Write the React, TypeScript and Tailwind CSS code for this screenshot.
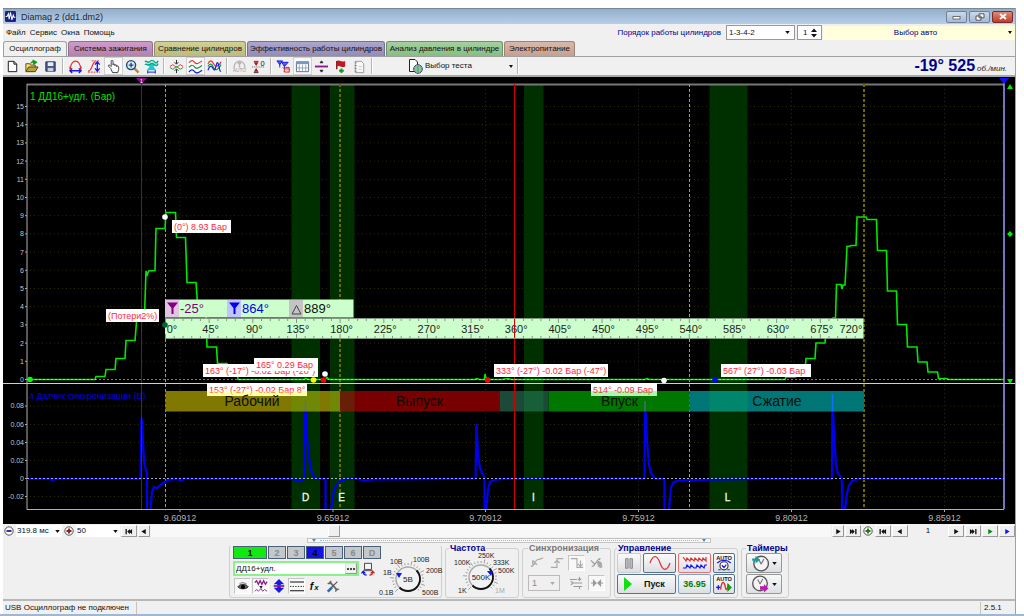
import type { ReactNode } from "react";

const tabs = [
  { label: "Осциллограф", look: "w-[64px] bg-[#f0f0f0] border-[#a0a0a0]" },
  { label: "Система зажигания", look: "w-[85px] bg-linear-to-b from-[#cf9cc9] to-[#b57fb0] border-[#93708f]" },
  { label: "Сравнение цилиндров", look: "w-[92px] bg-linear-to-b from-[#d0cf96] to-[#bdbb78] border-[#93916a]" },
  { label: "Эффективность работы цилиндров", look: "w-[138px] bg-linear-to-b from-[#aea6cf] to-[#938ab8] border-[#77709a]" },
  { label: "Анализ давления в цилиндре", look: "w-[117px] bg-linear-to-b from-[#a5cf9f] to-[#86bd80] border-[#6c9468]" },
  { label: "Электропитание", look: "w-[71px] bg-linear-to-b from-[#d6b9ab] to-[#c5a08f] border-[#9c8377]" },
];

const Svg = ({ children, box = "0 0 16 16", className = "size-4" }: { children: ReactNode; box?: string; className?: string }) => (
  <svg viewBox={box} className={className} fill="none" aria-hidden="true">{children}</svg>
);

const Tool = ({ name, pressed, children }: { name: string; pressed?: boolean; children: ReactNode }) => (
  <button
    type="button"
    aria-label={name}
    className={`flex h-[18px] w-[19px] shrink-0 items-center justify-center ${pressed ? "border border-[#d0d0d0] bg-[#fafafa]" : ""}`}
  >
    <Svg className="size-[15px]">{children}</Svg>
  </button>
);

const Sep = () => <span className="mx-[2px] h-4 w-[2px] shrink-0 border-l border-[#b4b4b4] bg-white" />;

const Caret = () => (
  <Svg box="0 0 6 4" className="h-[3px] w-[5px] shrink-0"><path d="M0 0H6L3 4Z" fill="#111" /></Svg>
);

const Pick = ({ label, value, className }: { label: string; value: string; className: string }) => (
  <span className={`relative flex items-center bg-white ${className}`}>
    <select aria-label={label} className="h-full w-full appearance-none bg-transparent pl-px text-[8px] leading-3 outline-none" defaultValue={value}>
      <option>{value}</option>
    </select>
    <span className="pointer-events-none absolute right-[2px] flex"><Caret /></span>
  </span>
);

const NavButton = ({ name, path, fill = "#111", className = "w-4" }: { name: string; path: string; fill?: string; className?: string }) => (
  <button type="button" aria-label={name} className={`flex h-3 items-center justify-center border border-white border-r-[#9a9a9a] border-b-[#9a9a9a] bg-[#f0f0f0] ${className}`}>
    <Svg box="0 0 10 8" className="h-[7px] w-2.5"><path d={path} fill={fill} /></Svg>
  </button>
);

const FIRST = "M1 1H2.5V7H1ZM3 4L6 1V7ZM5 4L8.5 1V7Z";
const PREV = "M2 4L7 1V7Z";
const NEXT = "M8 4L3 1V7Z";
const LAST = "M9 1H7.5V7H9ZM7 4L4 1V7ZM5 4L1.5 1V7Z";

const Header = () => (
  <header>
    <div className="flex h-4 items-center border-t border-[#7c8794] bg-linear-to-b from-[#93aecb] to-[#b8cfe8] pr-[2px] pl-[2px]">
      <Svg className="size-[11px]">
        <rect width="16" height="16" rx="2" fill="#1b2384" />
        <path d="M1 8H3L5 4L6 12L8 2L10 13L12 6L13 9H15" stroke="#fff" strokeWidth="1.5" />
      </Svg>
      <h1 className="ml-[5px] flex-1 text-[9px] leading-3 text-[#1c2733]">Diamag 2 (dd1.dm2)</h1>
      <div className="flex gap-[2px]">
        <button type="button" aria-label="Свернуть" className="flex h-3 w-[21px] items-center justify-center rounded-[2px] border border-[#6d8098] bg-linear-to-b from-[#cbdaea] to-[#a4bbd3]">
          <Svg box="0 0 9 7" className="h-[7px] w-[9px]"><rect x="1" y="3.5" width="7" height="2.5" fill="#fff" stroke="#555" strokeWidth=".8" /></Svg>
        </button>
        <button type="button" aria-label="Восстановить" className="flex h-3 w-[21px] items-center justify-center rounded-[2px] border border-[#6d8098] bg-linear-to-b from-[#cbdaea] to-[#a4bbd3]">
          <Svg box="0 0 10 8" className="h-2 w-2.5"><path d="M4 .8H9V4.8H4ZM1 3H6V7.2H1Z" fill="#fff" stroke="#555" /></Svg>
        </button>
        <button type="button" aria-label="Закрыть" className="flex h-3 w-[21px] items-center justify-center rounded-[2px] border border-[#7c2c22] bg-linear-to-b from-[#e08873] to-[#bd3c28]">
          <Svg box="0 0 8 7" className="h-[7px] w-2"><path d="M1 1L7 6M7 1L1 6" stroke="#fff" strokeWidth="2" /></Svg>
        </button>
      </div>
    </div>
    <div className="flex h-[17px] items-center">
      <nav className="flex flex-1 gap-[4px] pl-[3px] text-[8px] leading-3">
        {["Файл", "Сервис", "Окна", "Помощь"].map((item) => <a key={item} href="#">{item}</a>)}
      </nav>
      <label htmlFor="order" className="mr-[5px] text-[8px] text-[#00008b]">Порядок работы цилиндров</label>
      <span className="relative mr-[2px] flex h-[15px] w-[69px] items-center border border-[#999] bg-white">
        <select id="order" className="h-full w-full appearance-none bg-transparent pl-[2px] text-[8px] outline-none" defaultValue="1-3-4-2">
          <option>1-3-4-2</option>
        </select>
        <span className="pointer-events-none absolute right-1 flex"><Caret /></span>
      </span>
      <span className="mr-px flex h-[15px] w-[25px] items-center border border-[#999] bg-white">
        <input aria-label="Номер цилиндра" type="number" defaultValue={1} className="w-[13px] [appearance:textfield] pl-[5px] text-[8px] outline-none [&::-webkit-inner-spin-button]:appearance-none" />
        <Svg box="0 0 6 10" className="h-2.5 w-1.5"><path d="M0 4L3 0.5L6 4ZM0 6H6L3 9.5Z" fill="#111" /></Svg>
      </span>
      <button type="button" className="flex h-[14px] w-[192px] items-center bg-[#ffffdc] pr-[3px] text-[8px] text-[#00008b]">
        <span className="flex-1">Выбор авто</span>
        <Svg box="0 0 4 3" className="h-[3px] w-1"><path d="M0 0H4L2 3Z" fill="#111" /></Svg>
      </button>
    </div>
    <div role="tablist" className="flex h-4 items-end gap-px border-b border-[#a0a0a0]">
      {tabs.map((tab, i) => (
        <button key={tab.label} role="tab" type="button" aria-selected={i === 0} className={`h-[15px] rounded-t-[3px] border border-b-0 text-[8px] leading-3 whitespace-nowrap ${tab.look}`}>
          {tab.label}
        </button>
      ))}
    </div>
  </header>
);

const Toolbar = () => (
  <div className="flex h-[20px] items-center border-b-2 border-[#a8a8a8]">
    <Tool name="Новый"><path d="M3.5 2.5H9.5L12.5 5.5V13.5H3.5Z" fill="#fff" stroke="#111" /><path d="M9.5 2.5V5.5H12.5" stroke="#111" /></Tool>
    <Tool name="Открыть">
      <path d="M2 13V5H6L7 6.5H12V9" fill="#f6e27a" stroke="#5a4a10" />
      <path d="M2 13.5L5 8.5H15L12 13.5Z" fill="#b9a43c" stroke="#4a3c08" />
      <path d="M7 5C8 2 10 2 11 3M9.5 1L14 3.5L10 6Z" fill="#0a9a1a" stroke="#0a9a1a" strokeWidth=".8" />
    </Tool>
    <Tool name="Сохранить">
      <path d="M3 3H13V13H3Z" fill="#4a5a84" stroke="#2a3556" /><path d="M5 3.5H11V7.5H5Z" fill="#e6eef8" /><path d="M5 9.5H11V13H5Z" fill="#c6d1e6" />
    </Tool>
    <Sep />
    <Tool name="Период"><path d="M2.500 11C2.500 -.500 13.500 -.500 13.500 11" stroke="#e83030" strokeWidth="1.300" /><path d="M2 8V11M14 8V11" stroke="#e83030" /><path d="M3 12.500H13M4.500 10L2 12.500L4.500 15M11.500 10L14 12.500L11.500 15" stroke="#1717e6" strokeWidth="1.400" /></Tool>
    <Tool name="Амплитуда"><path d="M1 13C6 13 5 3 9 3" stroke="#e83030" strokeWidth="1.300" /><path d="M1 14H14M5 2H14" stroke="#e83030" strokeDasharray="2 1" /><path d="M11 4V12M8.500 6L11 3L13.500 6M8.500 10L11 13L13.500 10" stroke="#1717e6" strokeWidth="1.400" /></Tool>
    <Tool name="Перемещение" pressed>
      <path d="M5 10L2.500 7.500C2 6.500 3.500 6 4.500 7L5.500 8V2.500C5.500 1 7.500 1 7.500 2.500V6.500M7.500 6C8 5 9.500 5.200 9.500 6.500V7.500M9.500 6.500C10.500 5.800 11.500 6.200 11.500 7.500V8.500M11.500 7.500C12.500 7 13.500 7.500 13.500 9V11L12.500 14.500H7L5 10" fill="#fff" stroke="#222" strokeWidth=".9" />
    </Tool>
    <Tool name="Лупа"><path d="M10 10L14.500 14.500" stroke="#b48a3c" strokeWidth="2.600" /><circle cx="6.500" cy="6.500" r="4.800" fill="#d4ecfa" stroke="#24466e" strokeWidth="1.500" /><path d="M4 6.500H9M6.500 4V9" stroke="#24466e" strokeWidth="1.400" /></Tool>
    <Tool name="Диапазон"><path d="M3 5L6 8L3 12H13L10 8L13 5Z" fill="#1fc8cc" /><path d="M1 3C3 1 4 5 6 3S9 1 11 3S14 4 15 2M1 6C3 4 4 8 6 6S9 4 11 6S14 7 15 5" stroke="#00a88c" strokeWidth="1.500" /><path d="M4 12V15.500M12 12V15.500M4 14H12" stroke="#1717e6" /></Tool>
    <Sep />
    <Tool name="Совместить"><path d="M1 8L4 6L8 9L12 6L15 8" stroke="#e83030" /><path d="M1 9L4 11L8 8L12 11L15 9" stroke="#09a030" /><path d="M8 1V5M6 3.500L8 5.500L10 3.500M8 15V11M6 12.500L8 10.500L10 12.500" stroke="#222" /></Tool>
    <Tool name="Разделить" pressed><path d="M1 4C3 1 5 1 7 3.500S11 5 15 2" stroke="#e83030" strokeWidth="1.300" /><path d="M1 9C3 6 5 6 7 8.500S11 10 15 7" stroke="#09a030" strokeWidth="1.300" /><path d="M1 14C3 11 5 11 7 13.500S11 15 15 12" stroke="#1717e6" strokeWidth="1.300" /></Tool>
    <Tool name="Наложить"><path d="M1 5C3 1 5 1 7 5S12 9 15 3" stroke="#e83030" strokeWidth="1.200" /><path d="M1 8C3 4 5 5 7 9S12 12 15 6" stroke="#09a030" strokeWidth="1.200" /><path d="M1 12C3 6 5 7 7 11S10 2 11.500 4S13 14 15 13" stroke="#1717e6" strokeWidth="1.200" /></Tool>
    <Sep />
    <Tool name="Авто"><path d="M2 10C2 -.500 14 -.500 14 10" stroke="#b4b4b4" strokeWidth="1.300" /><path d="M8 3V9M6 5L8 3L10 5" stroke="#b5b5b5" strokeWidth="1.500" /><text x="1" y="14" fontSize="5" fill="#999">AUTO</text></Tool>
    <Tool name="Установка нуля"><path d="M1 8.500H15" stroke="#555" strokeDasharray="1 1" /><path d="M3 2.500H8M3 14.500H8" stroke="#333" /><path d="M3 3.500H8L5.500 7.500ZM3 13.500H8L5.500 9.500Z" fill="#b01020" /><text x="10" y="7" fontSize="8" fill="#111">0</text></Tool>
    <Sep />
    <Tool name="Маркеры"><path d="M1 2H7L4 6ZM4 5V9M6 3.500H13L9 8ZM9 7V11" fill="#5b60f0" stroke="#1717e6" /><path d="M7 9L14 14M8 13H14V9H10" stroke="#d02020" /><path d="M9 10.500H14V14H9Z" fill="#f7c8c8" stroke="#d02020" strokeWidth=".800" /></Tool>
    <Tool name="Таблица" pressed><path d="M1.500 3H14.500V13.500H1.500Z" fill="#fff" stroke="#5a6a86" /><path d="M1.500 3H14.500V5.500H1.500Z" fill="#7a98c4" /><path d="M4.500 6V13M8 6V13M11.500 6V13M2 9.500H14" stroke="#8090a8" strokeWidth=".800" /></Tool>
    <Tool name="Разделитель"><path d="M1 8H15" stroke="#8d1a8d" strokeWidth="2" /><path d="M6.500 4L8 2L9.500 4ZM6.500 12L8 14L9.500 12Z" fill="#222" stroke="#222" /></Tool>
    <Tool name="Флажки"><path d="M4 2V11" stroke="#801010" strokeWidth="1.500" /><path d="M4 2C7 .500 9 4 13 2V8C9 10 7 6 4 8Z" fill="#c01824" /><path d="M9 10V15M6.500 12.500H11.500" stroke="#08a010" strokeWidth="2" /></Tool>
    <Tool name="Заметки"><path d="M3.500 2.500H10L12.500 5V14.500H3.500Z" fill="#f8f8f8" stroke="#999" /><path d="M3 4H5M3 7H5M3 10H5M3 13H5" stroke="#777" /><path d="M7 8H11M7 11H10" stroke="#ccc" /></Tool>
    <Sep />
    <button type="button" className="ml-[30px] flex h-4 w-[110px] items-center gap-[2px] pl-[2px] text-left text-[8px] leading-3">
      <Svg box="0 0 16 16" className="h-4 w-4">
        <path d="M2.500 1.500H8L10.500 4V13.500H2.500Z" fill="#fff" stroke="#222" /><circle cx="11" cy="11" r="4.300" fill="#b9dfc0" stroke="#345" /><path d="M7 11H15M11 7V15M8 9H14M8 13H14" stroke="#386" strokeWidth=".700" />
      </Svg>
      <span className="flex-1">Выбор теста</span>
      <Svg box="0 0 4 3" className="mr-[2px] h-[3px] w-1"><path d="M0 0H4L2 3Z" fill="#111" /></Svg>
    </button>
    <Sep />
    <output className="ml-auto flex items-baseline gap-[2px] pr-2 font-bold text-[#00008b]">
      <span className="text-[16px] leading-4">-19° 525</span>
      <span className="text-[8px] font-normal text-[#222] italic">об./мин.</span>
    </output>
  </div>
);

const pressure =
  "M30 379.500H95L96 376.500H105L106 369.500H115L116 358.500H125L126 340.500H135L137 316H144.500L146 271L147 276L148.500 271L155 270.500L156 228.500H165L166 212.500H175.500L176.500 237.500H185.500L187 282.500H196L198 311H206L207 347H216.500L217.500 363.500H227L228 373H237L238 379.500H304L306 378.500L308 379.500H325L327 377.500L329 379.500H475L477 378.500L479 379.500H484.500L485 374L486.500 379.500H502L507 378.500L512 379.500H645L647 378.500L649 379.500H785L786 377H795L796 371H805L806 358.500H815L816 343H825L826 330H832L833 318H835.500L836.500 284.500H841L842 289L843 285H845L847 246.500L850 246L851 245.500H856L857 217H866L867 219.500H876.500L877.500 250.500H886.500L887.500 291H896.500L897.500 324.500H906.500L907.500 347H917L918 362H927L928 372H937.500L938.500 378.500H947L948 379.500H1004";

const sync =
  "M27 479H50L52 480L56 479H140.500L141.500 418L142.500 430L143.500 452L144.500 465L147 473V509M150.500 509L152 492L154 487L157 488L162 484L168 480L175 479L182 480L184 478.500L190 479H293L298 481L303 480L304 479L305.500 400L307 438L309 458L311 470L313 475L316 479H325.500V509M331 509L333 495L336 485L340 481L348 478.500L358 479L364 480.500L372 479.500L450 479L475.500 478.500L476.500 424L478 455L480 468L482 473L484.500 477V509M486.500 509L488 489L490 482L494 480L502 479H560L640 478.500L644.500 479L645 401L647 440L649 465L651 473L654 477L656 479H664.500V509M669 509L671 487L674 482L679 480.500L690 480L760 479H832L832.500 394L834 435L836 465L838 474L841 477L842 483V509M845 509L847 493L849 486L852 481L858 479H1004";

const zones = [[291.5, 28.5, "D", 305.5], [330, 24.5, "E", 341.5], [524, 19.5, "I", 533.5], [709.5, 38, "L", 727.5]] as const;
const phases = [
  [165.5, 174.5, "#807800", "Рабочий", 252],
  [340, 159.5, "#780000", "Выпуск", 419.5],
  [499.5, 49, "#1b4a38", "", 0],
  [548.5, 141, "#007800", "Впуск", 619.5],
  [689.5, 174.5, "#007676", "Сжатие", 777],
] as const;
const times = [[180, "9.60912"], [333, "9.65912"], [485.5, "9.70912"], [638.5, "9.75912"], [791.5, "9.80912"], [944.5, "9.85912"]] as const;
const notes = [
  [172, 220, 59, "(0°) 8.93 Бар"],
  [106, 309, 53, "(Потери2%)"],
  [203, 364, 115, "163° (-17°) -0.02 Бар (-20°)"],
  [254, 358, 64, "165° 0.29 Бар"],
  [207, 383, 100, "153° (-27°) -0.02 Бар 8°"],
  [494, 364, 114, "333° (-27°) -0.02 Бар (-47°)"],
  [591, 383, 66, "514° -0.09 Бар"],
  [721, 364, 90, "567° (27°) -0.03 Бар"],
] as const;
const dots = [
  [165, 217, "#fff"], [30, 379.5, "#0f0"], [165, 325, "#063"], [313.5, 380, "#ff0"], [323.5, 380, "#f00"],
  [325, 374, "#fff"], [487.5, 380, "#f00"], [664, 380.5, "#fff"], [715, 380, "#00f"],
] as const;
const degrees = Array.from({ length: 16 }, (_, i) => i * 45);
const minor = Array.from({ length: 80 }, (_, i) => i).map((i) => {
  const x = (165.5 + i * 8.73).toFixed(1);
  const len = i % 5 === 0 ? 4 : 2;
  return `M${x} 319v${len}M${x} 338v-${len}`;
}).join("");

const Chart = () => (
  <svg viewBox="3 77 1012 447" className="block h-auto w-full bg-black" role="img" aria-label="Осциллограмма" fill="none">
    <g stroke="#2b2b08" strokeDasharray="1 3">
      {Array.from({ length: 15 }, (_, i) => <path key={i} d={`M30 ${379.5 - (i + 1) * 18.2}H1003`} />)}
      {[406, 424.5, 442.5, 460.5, 496.5].map((y) => <path key={y} d={`M30 ${y}H1003`} />)}
      {times.map(([x]) => <path key={x} d={`M${x} 85V509`} />)}
    </g>
    {zones.map(([x, w]) => <rect key={x} x={x} y="84" width={w} height="425" fill="#003000" />)}
    <path d="M27 84.500H1004" stroke="#777" strokeWidth="2" />
    <path d="M27 84V509.500H1004" stroke="#b0b0b0" />
    <g fontSize="7" fill="#c4c4c4" textAnchor="end">
      {Array.from({ length: 16 }, (_, i) => (
        <g key={i}><text x="24" y={382 - i * 18.2}>{i}</text><path d={`M25 ${379.5 - i * 18.2}h2`} stroke="#aaa" /></g>
      ))}
      {[["0.08", 406], ["0.06", 424.5], ["0.04", 442.5], ["0.02", 460.5], ["0", 478.5], ["-0.02", 496.5]].map(([t, y]) => (
        <g key={t}><text x="24" y={Number(y) + 2}>{t}</text><path d={`M25 ${y}h2`} stroke="#aaa" /></g>
      ))}
    </g>
    <g fontSize="9" fill="#b4b4b4" textAnchor="middle">
      {times.map(([x, t]) => <g key={t}><text x={x} y="521">{t}</text><path d={`M${x} 510v2`} stroke="#aaa" /></g>)}
    </g>
    <path d="M165.500 84V509M689.500 84V509" stroke="#b4ac00" strokeDasharray="3 2" />
    <path d="M340 84V509M864 84V509" stroke="#6e6600" strokeWidth="2" strokeDasharray="3 2" />
    <text x="30" y="100" fontSize="10" fill="#00e000">1 ДД16+удл. (Бар)</text>
    <text x="29" y="399" fontSize="9" fill="#0000e0">4 Датчик синхронизации (В)</text>
    <path d={sync} stroke="#0000f0" strokeWidth="2.200" />
    <path d="M27 478.500H1004" stroke="#d8d8ff" strokeDasharray="2 2" strokeWidth=".800" />
    {phases.map(([x, w, fill]) => <rect key={x} x={x} y="391" width={w} height="20.500" fill={fill} />)}
    <path d="M291.500 391h28.500v20.500h-28.500ZM330 391h24.500v20.500h-24.500ZM709.500 391h38v20.500h-38ZM524 391h19.500v20.500h-19.500Z" fill="#00ff30" fillOpacity=".12" />
    <path d="M305.500 401V411M645 401V411" stroke="#5a6a9a" strokeOpacity=".8" strokeWidth="1.500" />
    <path d="M832.500 394V411" stroke="#1070ff" strokeWidth="1.500" />
    <path d="M141.500 80V509" stroke="#800080" />
    <path d="M136 78H147L141.500 84Z" fill="#8a108a" />
    <text x="140" y="83" fontSize="5" fill="#fff">1</text>
    <path d="M514.500 84V509" stroke="#d00000" />
    <path d={pressure} stroke="#00e800" strokeWidth="1.600" />
    <path d="M27 379.500H1004" stroke="#fff" strokeOpacity=".6" strokeDasharray="2 2" strokeWidth=".800" />
    <path d="M3 383.500H1015" stroke="#d0d0d0" />
    <rect x="165" y="299.500" width="188.500" height="18" fill="#ccffcc" />
    <rect x="165" y="300" width="14" height="17" fill="#e0c4e0" />
    <rect x="227" y="300" width="14" height="17" fill="#c0c4ff" />
    <rect x="289" y="300" width="14" height="17" fill="#c4c4c4" />
    <path d="M167 302.500H178L173.500 308V314H171.500V308Z" fill="#800080" />
    <path d="M229 302.500H240L235.500 308V314H233.500V308Z" fill="#0000f0" />
    <path d="M292 314L296.500 305.500L301 314Z" stroke="#444" />
    <g fontSize="13">
      <text x="180" y="313" fill="#800080">-25°</text>
      <text x="242" y="313" fill="#0000f0">864°</text>
      <text x="304" y="313" fill="#111">889°</text>
    </g>
    <rect x="165" y="318.500" width="698.500" height="20" fill="#ccffcc" />
    <path d={minor} stroke="#6a806a" strokeWidth=".800" />
    <path d="M165 318.500H863.500M165 338.500H863.500" stroke="#889c88" strokeWidth=".800" />
    <g fontSize="11" fill="#1c241c" textAnchor="middle">
      {degrees.map((d) => <text key={d} x={d === 0 ? 172 : 167 + d * 0.97} y="333">{d}°</text>)}
      <text x="851" y="333">720°</text>
    </g>
    <path d="M514.500 319V338" stroke="#d00000" />
    <g fontSize="9" fill="#ff2a3a">
      {notes.map(([x, y, w, t]) => (
        <g key={t}><rect x={x} y={y} width={w} height="13" fill="#fff" /><text x={x + 2} y={y + 10}>{t}</text></g>
      ))}
    </g>
    <rect x="207" y="391" width="100" height="5" fill="#ffff40" fillOpacity=".45" />
    <rect x="591" y="391" width="66" height="5" fill="#20e020" fillOpacity=".35" />
    <g fontSize="14" fill="#0a0f0a" textAnchor="middle">
      {phases.map(([x, , , t, tx]) => t && <text key={x} x={tx} y="406">{t}</text>)}
    </g>
    <g fontSize="10" fill="#e8ffe8" stroke="#e8ffe8" strokeWidth=".300" textAnchor="middle">
      {zones.map(([, , t, tx]) => <text key={t} x={tx} y="501">{t}</text>)}
    </g>
    {dots.map(([x, y, fill]) => <circle key={x} cx={x} cy={y} r="2.800" fill={fill} />)}
    <path d="M1004 80V509" stroke="#9a9aff" strokeWidth="1.500" />
    <path d="M999 78H1009L1004 84Z" fill="#1010ff" />
    <path d="M1007 89H1013L1010 84ZM1010 231L1013 234L1010 237L1007 234ZM1007 379H1013L1010 384Z" fill="#00f000" />
  </svg>
);

const ZoomMark = ({ name, tone, plus }: { name: string; tone: string; plus?: boolean }) => (
  <button type="button" aria-label={name} className="flex size-3 items-center justify-center">
    <Svg box="0 0 12 12" className="size-2.5">
      <circle cx="6" cy="6" r="5" fill="#fff" stroke="#333" />
      <path d={plus ? "M3 6H9M6 3V9" : "M3 6H9"} stroke={tone} strokeWidth="2.200" />
    </Svg>
  </button>
);

const ScrollRow = () => (
  <div className="flex h-[14px] items-center gap-px bg-[#f0f0f0]">
    <ZoomMark name="Уменьшить" tone="#2020a0" />
    <Pick label="Развёртка" value="319.8 мс" className="h-3 w-[46px]" />
    <ZoomMark name="Увеличить" tone="#a01818" plus />
    <Pick label="Масштаб" value="50" className="h-3 w-[44px]" />
    <NavButton name="В начало" path={FIRST} className="w-[16px]" />
    <NavButton name="Назад" path={PREV} className="w-[12px]" />
    <div className="flex h-3 flex-1 bg-[#f8f8f8]">
      <span className="w-[26%]" />
      <button type="button" aria-label="Ползунок" className="h-3 w-3 border border-white border-r-[#999] border-b-[#999] bg-[#f0f0f0]" />
    </div>
    <NavButton name="Вперёд" path={NEXT} className="w-[12px]" />
    <NavButton name="В конец" path={LAST} />
    <ZoomMark name="Добавить" tone="#108010" plus />
    <NavButton name="Первая запись" path={FIRST} />
    <NavButton name="Предыдущая запись" path={PREV} />
    <output className="w-[38px] text-center text-[8px]">1</output>
    <NavButton name="Следующая запись" path={NEXT} />
    <NavButton name="Последняя запись" path={LAST} />
    <NavButton name="Воспроизвести" path={NEXT} fill="#008a10" />
    <NavButton name="Дальше" path={NEXT} fill="#1010ff" />
  </div>
);

const channels = [
  ["1", "w-[34px] bg-[#12e812] text-black"],
  ["2", "w-[18px] bg-[#c4c8cc] text-[#888]"],
  ["3", "w-[18px] bg-[#c4c8cc] text-[#888]"],
  ["4", "w-[18px] bg-[#1212e8] text-black"],
  ["5", "w-[18px] bg-[#c4c8cc] text-[#888]"],
  ["6", "w-[18px] bg-[#c4c8cc] text-[#888]"],
  ["D", "w-[18px] bg-[#c4c8cc] text-[#888]"],
] as const;

const knobTicks = Array.from({ length: 23 }, (_, i) => {
  const a = ((135 + i * 12.3) * Math.PI) / 180;
  const r = i % 4 === 0 ? 18 : 16;
  return `M${(14 * Math.cos(a)).toFixed(1)} ${(14 * Math.sin(a)).toFixed(1)}L${(r * Math.cos(a)).toFixed(1)} ${(r * Math.sin(a)).toFixed(1)}`;
}).join("");

type Mark = readonly [string, number, number, string?];
const Knob = ({ value, marks, pointer }: { value: string; marks: readonly Mark[]; pointer: string }) => (
  <svg viewBox="-32 -26 66 45" className="h-[45px] w-[66px] shrink-0 overflow-visible" role="img" aria-label={value} fill="none">
    <path d={knobTicks} stroke="#888" strokeWidth=".800" />
    <circle r="12" fill="#f2f2f2" stroke="#aaa" strokeWidth="1.500" />
    <path d="M8.500 -8.500A12 12 0 0 1 -8.500 8.500" stroke="#111" strokeWidth="1.800" />
    <text y="3" fontSize="8" textAnchor="middle" fill="#222">{value}</text>
    <path d={pointer} fill="#1010ff" />
    <g fontSize="7">
      {marks.map(([t, x, y, fill]) => <text key={t} x={x} y={y} fill={fill ?? "#222"}>{t}</text>)}
    </g>
  </svg>
);

const Small = ({ name, pressed, children }: { name: string; pressed?: boolean; children: ReactNode }) => (
  <button type="button" aria-label={name} className={`flex h-4 w-[17px] items-center justify-center ${pressed ? "border border-[#c4c4c4] border-r-white border-b-white bg-[#f8f8f8]" : ""}`}>
    <Svg className="size-3.5">{children}</Svg>
  </button>
);

const Group = ({ title, tone = "text-[#00008b]", className, children }: { title: string; tone?: string; className: string; children: ReactNode }) => (
  <fieldset className={`h-[55px] min-w-0 rounded-[3px] border border-[#cfcfcf] ${className}`}>
    <legend className={`px-px text-[9px] leading-[10px] font-bold ${tone}`}>{title}</legend>
    {children}
  </fieldset>
);

const key = "flex h-5 items-center justify-center rounded-[2px] border bg-linear-to-b from-[#fafafa] to-[#dcdfe3]";

const Controls = () => (
  <div className="flex items-end justify-center gap-[3px] pb-px">
    <section aria-label="Каналы" className="flex h-[53px] w-[213px] rounded-[3px] border border-[#cfcfcf] border-t-transparent pl-[3px]">
      <div className="flex w-[143px] flex-col gap-[2px]">
        <div className="flex h-3 gap-px">
          {channels.map(([name, look]) => (
            <button key={name} type="button" className={`h-[13px] shrink-0 border border-[#4a5f78] text-[9px] leading-[10px] font-bold ${look}`}>{name}</button>
          ))}
        </div>
        <div className="mt-px flex items-center gap-[2px]">
          <div className="flex h-[15px] w-[126px] shrink-0 items-center border-2 border-[#8af28a] bg-white">
            <input aria-label="Датчик" defaultValue="ДД16+удл." className="w-0 flex-1 pl-px text-[8px] leading-3 outline-none" />
            <button type="button" aria-label="Выбрать датчик" className="flex h-[11px] w-3 items-center justify-center border border-[#ddd] border-r-[#999] border-b-[#999] bg-[#f0f0f0]">
              <Svg box="0 0 8 2" className="h-[2px] w-2"><path d="M0 1H2M3 1H5M6 1H8" stroke="#111" strokeWidth="1.500" /></Svg>
            </button>
          </div>
          <button type="button" aria-label="Поменять каналы">
            <Svg className="size-3.5"><path d="M4 1.500H12V8.500H4Z" fill="#f4f4f4" stroke="#333" /><path d="M3 8.500H13V10.500H3Z" fill="#666" /><path d="M6.500 15C3.500 15 2.500 14 2.500 11.500M.500 13L2.500 10.500L5 13" stroke="#1717e6" strokeWidth="1.400" /><path d="M9.500 15C12.500 15 13.500 14 13.500 11.500M11 13L13.500 10.500L15.500 13" stroke="#e02020" strokeWidth="1.400" /></Svg>
          </button>
        </div>
        <div className="flex gap-px pl-px">
          <Small name="Видимость" pressed><path d="M2 9C5 5 11 5 14 9C11 12 5 12 2 9Z" fill="#666" stroke="#222" /><circle cx="8" cy="9" r="2.400" fill="#000" /><path d="M4 5L8 4L12 5.500" stroke="#777" /></Small>
          <Small name="Фильтр" pressed><path d="M1 4L3 2L5 6L7 2L9 6L11 2L13 6L15 3" stroke="#8d1a8d" strokeWidth="1.500" /><path d="M1 14L3 12L5 14L8 11L10 14L12 12L15 14" stroke="#8d1a8d" /><path d="M6 8H10L8 11Z" fill="#222" /></Small>
          <Small name="Инверсия"><path d="M8 0L14 6H10V10H14L8 16L2 10H6V6H2Z" fill="#1717e6" /><path d="M2 8H14" stroke="#8d1a8d" strokeWidth="2" /></Small>
          <Small name="Линии" pressed><path d="M0 3.500H16M0 13.500H16" stroke="#111" strokeWidth="1.200" /><path d="M0 8.500H16" stroke="#111" strokeDasharray="1.500 1.500" /></Small>
          <Small name="Функция"><text x="2" y="12" fontSize="12" fontStyle="italic" fontWeight="700" fill="#111">f</text><text x="7" y="13" fontSize="9" fontStyle="italic" fontWeight="700" fill="#111">x</text></Small>
          <Small name="Настройка"><path d="M4 3L13 13" stroke="#666" strokeWidth="2" /><path d="M5 11L13 3" stroke="#555" strokeWidth="1.500" /><path d="M2 14.500L7 9.500" stroke="#2b6cb8" strokeWidth="3" /><path d="M2 4.500C3.500 6 6 5 5.500 2M11 14.500C11 11.500 13 11 15 12" stroke="#666" strokeWidth="1.500" /></Small>
        </div>
      </div>
      <div className="mt-[7px]">
        <Knob value="5В" pointer="M-12 -6H-6L-9 -1Z" marks={[["10В", -18, -15], ["100В", 5, -17], ["1В", -25, -4], ["200В", 18, -6], ["0.1В", -29, 16], ["500В", 14, 16]]} />
      </div>
    </section>

    <Group title="Частота" className="w-[74px] pl-[3px]">
      <div className="-mt-[2px]">
        <Knob value="500K" pointer="M6 -6H12L10 -1Z" marks={[["250K", -3, -19], ["100K", -27, -12], ["333K", 12, -12], ["500K", 17, -4], ["1K", -23, 16], ["1M", 14, 16, "#aaa"]]} />
      </div>
    </Group>

    <Group title="Синхронизация" tone="text-[#777]" className="w-[89px] px-[5px]">
      <div className="flex h-5 items-center justify-between">
        <Small name="По фронту"><path d="M1 12C5 12 6 4 9 4S13 3 15 2M3 5L8 10M3 5V9H7" stroke="#aaa" strokeWidth="1.300" /></Small>
        <Small name="Фронт вверх"><path d="M1 13H8V3H15M5 8L8 5L11 8" stroke="#aaa" strokeWidth="1.300" /></Small>
        <Small name="Фронт вниз" pressed><path d="M1 3H8V13H15M9 9L12 12L14.500 9M12 12V5" stroke="#aaa" strokeWidth="1.300" /></Small>
        <Small name="Автосинхронизация"><path d="M1 5L6 10M2 12C7 12 7 3 12 3M8 7L14 13" stroke="#999" strokeWidth="1.300" /><path d="M8 7C10 4 14 7 14 10L12 14L9 12Z" fill="#aaa" /></Small>
      </div>
      <div className="flex h-5 items-center gap-[4px]">
        <span className="relative flex h-4 w-[33px] items-center border border-[#bbb]">
          <select aria-label="Канал синхронизации" disabled className="h-full w-full appearance-none pl-[3px] text-[9px] text-[#888] opacity-100"><option>1</option></select>
          <Svg box="0 0 6 4" className="pointer-events-none absolute right-1 h-[3px] w-[5px]"><path d="M0 0H6L3 4Z" fill="#aaa" /></Svg>
        </span>
        <span className="flex-1" />
        <Small name="Уровень"><path d="M1 4H9M5 8H15M5 12H15M12 1V5M10 3L12 5L14 3M12 15V12M2 6L5 8L2 10" stroke="#999" strokeWidth="1.200" /></Small>
        <Small name="Центрировать" pressed><path d="M1 8H6M15 8H10M4 5L7 8L4 11ZM12 5L9 8L12 11Z" fill="#999" stroke="#999" strokeWidth="1.300" /></Small>
      </div>
    </Group>

    <Group title="Управление" className="w-[124px] px-[2px]">
      <div className="grid grid-cols-[24px_33px_33px_22px] gap-[2px] gap-y-px">
        <button type="button" aria-label="Пауза" className={`${key} border-[#ccc]`}><Svg className="size-3.5"><path d="M4 3H7V14H4ZM9 3H12V14H9Z" fill="#bbb" stroke="#888" /></Svg></button>
        <button type="button" aria-label="Синусоида" className={`${key} border-[#56728f]`}><Svg box="0 0 24 16" className="h-4 w-6"><path d="M2 8C5 -.500 9 -.500 12 8S19 16.500 22 8" stroke="#e03030" strokeWidth="1.200" /></Svg></button>
        <button type="button" aria-label="Два сигнала" className={`${key} border-[#f07070]`}><Svg box="0 0 26 16" className="h-4 w-[26px]"><path d="M1 2L4 6L5 3L8 6L9 3L12 6L13 3L16 6L17 3L20 6L21 3L24 6V2" stroke="#e03030" strokeWidth="1.200" /><path d="M1 13H4L5 10L8 13L9 10L12 13H14L15 10L18 13L19 10L22 13L23 10H25" stroke="#1717e6" strokeWidth="1.200" /></Svg></button>
        <button type="button" aria-label="Автонастройка" className={`${key} border-[#56728f]`}><Svg className="size-[18px]"><text x="1" y="5" fontSize="5" fontWeight="700" fill="#111">AUTO</text><circle cx="8" cy="10.500" r="3.600" fill="#fff" stroke="#333" /><path d="M2 8C5 5 11 5 14 8M3 14H5M11 14H13M6 10L8 12L10 9.500" stroke="#1717e6" strokeWidth="1.100" /></Svg></button>
        <button type="button" className={`${key} col-span-2 gap-2 border-[#56728f] text-[9px] font-bold`}><Svg box="0 0 8 14" className="h-3.5 w-2"><path d="M0 0L8 7L0 14Z" fill="#10e010" /></Svg><span className="mr-1 ml-1">Пуск</span></button>
        <button type="button" className={`${key} border-[#7aa4cc] text-[9px] font-bold text-[#087a08]`}>36.95</button>
        <button type="button" aria-label="Автозапуск" className={`${key} border-[#56728f]`}><Svg className="size-[18px]"><text x="1" y="5" fontSize="5" fontWeight="700" fill="#111">AUTO</text><path d="M1 11H5M3 9V13" stroke="#1717e6" strokeWidth="1.300" /><path d="M5 13C6 5 8 5 9 10S11 13 12 8" stroke="#e03030" strokeWidth="1.200" /><path d="M11 7L15 11L11 15Z" fill="#08a010" /></Svg></button>
      </div>
    </Group>

    <Group title="Таймеры" className="w-[48px] px-[4px]">
      <div className="flex flex-col gap-px">
        <button type="button" aria-label="Таймер запуска" className={`${key} w-[36px] gap-[3px] border-[#999]`}><Svg className="size-[18px]"><circle cx="9" cy="8.500" r="6.500" fill="#f4f4f4" stroke="#555" strokeWidth="1.200" /><path d="M9 9L11.500 4.500M9 9L7 5" stroke="#777" /><path d="M1 4H4V1.500L8 5L4 8.500V6H1Z" fill="#1a9a9a" /></Svg><Caret /></button>
        <button type="button" aria-label="Таймер остановки" className={`${key} w-[36px] gap-[3px] border-[#999]`}><Svg className="size-[18px]"><circle cx="8" cy="7.500" r="6.500" fill="#f4f4f4" stroke="#555" strokeWidth="1.200" /><path d="M8 8L10.500 3.500M8 8L6 4" stroke="#777" /><path d="M8 10H11.500V8L15.500 12L11.500 15.500V13H8Z" fill="#c018b0" /></Svg><Caret /></button>
      </div>
    </Group>
  </div>
);

export default function App() {
  return (
    <div className="bg-white pt-2 pr-[9px] pl-[3px] font-['Liberation_Sans',Arial,sans-serif] text-[8px] leading-3 text-[#111]">
      <main className="bg-[#f0f0f0] shadow-[1px_0_0_#a0a0a0]">
        <Header />
        <Toolbar />
        <Chart />
        <ScrollRow />
        <div className="mx-auto flex h-[5px] w-2/5 items-center justify-between border border-[#c4c4c4] bg-[#f6f9fc] px-1">
          <Svg box="0 0 4 3" className="h-[3px] w-1"><path d="M0 0H4L2 3Z" fill="#3c8fd8" /></Svg>
          <span className="mx-1 flex-1 border-t border-dotted border-[#8fc0e8]" />
          <Svg box="0 0 4 3" className="h-[3px] w-1"><path d="M0 0H4L2 3Z" fill="#3c8fd8" /></Svg>
        </div>
        <Controls />
        <footer className="flex h-[15px] items-center border-t-2 border-[#b8b8b8] pl-[2px]">
          <span className="w-[132px] border-r border-[#c4c4c4]">USB Осциллограф не подключен</span>
          <span className="flex-1" />
          <span className="w-[35px] border-l border-[#c4c4c4] pl-[3px]">2.5.1</span>
        </footer>
      </main>
      <div className="-mr-[9px] -ml-[3px] h-[2px] bg-[#9db7d5]" />
    </div>
  );
}
